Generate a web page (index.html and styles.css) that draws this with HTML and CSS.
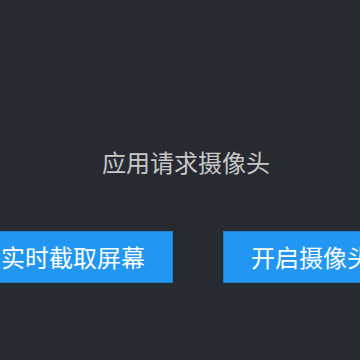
FILE: index.html
```html
<!DOCTYPE html>
<html lang="zh-CN">
<head>
<meta charset="utf-8">
<title>应用请求摄像头</title>
<link rel="stylesheet" href="styles.css">
</head>
<body>
<div class="screen">
  <div class="title">应用请求摄像头</div>
  <div class="actions">
    <button class="btn">实时截取屏幕</button>
    <button class="btn">开启摄像头</button>
  </div>
</div>
</body>
</html>
```
FILE: styles.css
```css
html, body {
  margin: 0;
  padding: 0;
  width: 360px;
  height: 360px;
  overflow: hidden;
  background: #272a31;
}
.screen {
  width: 372px;
  height: 360px;
  display: flex;
  flex-direction: column;
  align-items: center;
  padding-top: 150px;
  box-sizing: border-box;
  font-family: "Noto Sans CJK SC", "Noto Sans", sans-serif;
}
.title {
  font-size: 24px;
  line-height: 24px;
  color: #c8c8c8;
  white-space: nowrap;
}
.actions {
  margin-top: 57px;
  display: flex;
  justify-content: center;
  gap: 50px;
  width: 372px;
}
.btn {
  flex: none;
  height: 52px;
  padding: 0 27px;
  border: 1px solid #1e7fd0;
  background: #2196f3;
  color: #ffffff;
  font-family: inherit;
  font-size: 24px;
  line-height: 50px;
  white-space: nowrap;
}
```
